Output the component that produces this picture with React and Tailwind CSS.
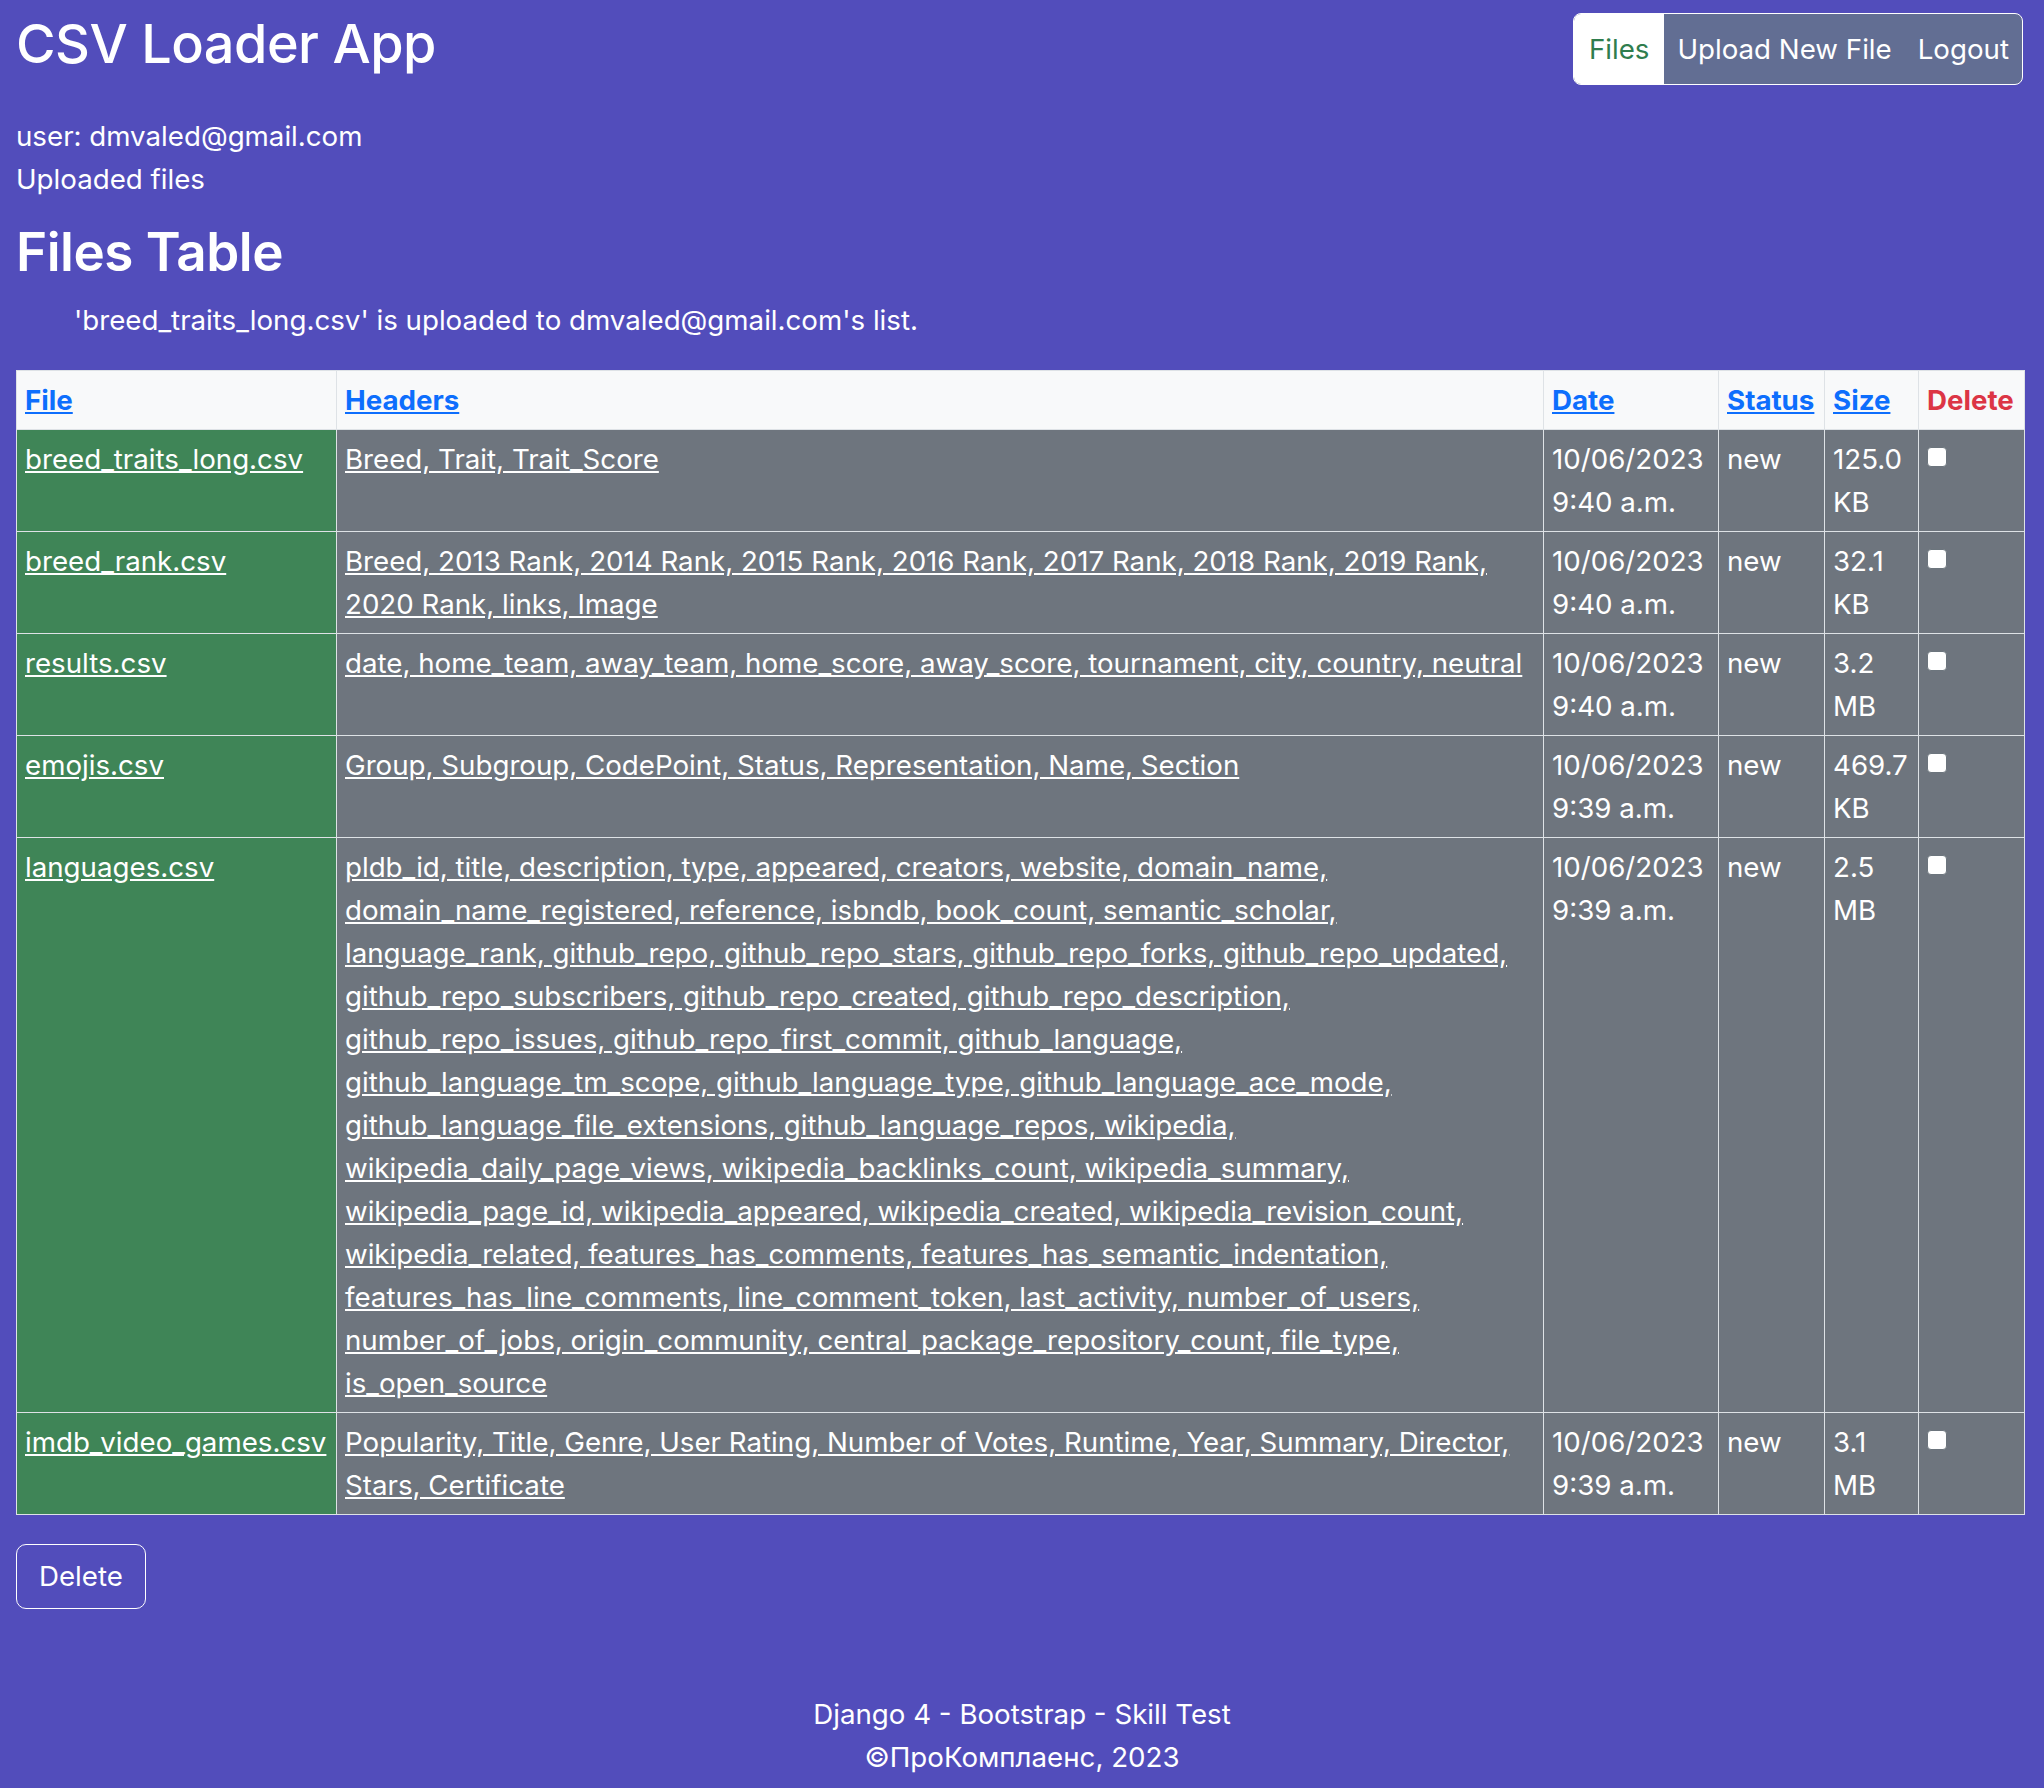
import React from 'react'

const files = [
  {
    name: 'breed_traits_long.csv',
    headers: 'Breed, Trait, Trait_Score',
    date: '10/06/2023',
    time: '9:40 a.m.',
    status: 'new',
    size: ['125.0', 'KB'],
  },
  {
    name: 'breed_rank.csv',
    headers:
      'Breed, 2013 Rank, 2014 Rank, 2015 Rank, 2016 Rank, 2017 Rank, 2018 Rank, 2019 Rank, 2020 Rank, links, Image',
    date: '10/06/2023',
    time: '9:40 a.m.',
    status: 'new',
    size: ['32.1', 'KB'],
  },
  {
    name: 'results.csv',
    headers: 'date, home_team, away_team, home_score, away_score, tournament, city, country, neutral',
    date: '10/06/2023',
    time: '9:40 a.m.',
    status: 'new',
    size: ['3.2', 'MB'],
  },
  {
    name: 'emojis.csv',
    headers: 'Group, Subgroup, CodePoint, Status, Representation, Name, Section',
    date: '10/06/2023',
    time: '9:39 a.m.',
    status: 'new',
    size: ['469.7', 'KB'],
  },
  {
    name: 'languages.csv',
    headers:
      'pldb_id, title, description, type, appeared, creators, website, domain_name, domain_name_registered, reference, isbndb, book_count, semantic_scholar, language_rank, github_repo, github_repo_stars, github_repo_forks, github_repo_updated, github_repo_subscribers, github_repo_created, github_repo_description, github_repo_issues, github_repo_first_commit, github_language, github_language_tm_scope, github_language_type, github_language_ace_mode, github_language_file_extensions, github_language_repos, wikipedia, wikipedia_daily_page_views, wikipedia_backlinks_count, wikipedia_summary, wikipedia_page_id, wikipedia_appeared, wikipedia_created, wikipedia_revision_count, wikipedia_related, features_has_comments, features_has_semantic_indentation, features_has_line_comments, line_comment_token, last_activity, number_of_users, number_of_jobs, origin_community, central_package_repository_count, file_type, is_open_source',
    date: '10/06/2023',
    time: '9:39 a.m.',
    status: 'new',
    size: ['2.5', 'MB'],
  },
  {
    name: 'imdb_video_games.csv',
    headers:
      'Popularity, Title, Genre, User Rating, Number of Votes, Runtime, Year, Summary, Director, Stars, Certificate',
    date: '10/06/2023',
    time: '9:39 a.m.',
    status: 'new',
    size: ['3.1', 'MB'],
  },
]

export default function App() {
  return (
    <div
      className="min-h-screen bg-[#524dbb] text-white text-[27.7px] leading-[43px] flex flex-col"
      style={{ fontFamily: 'Inter, "Noto Sans", sans-serif' }}
    >
      {/* Header */}
      <div className="flex items-start justify-between pl-4 pr-[21px] pt-[10px]">
        <h1 className="text-[54px] leading-[67px] font-medium tracking-[-0.5px]">CSV Loader App</h1>
        <nav className="mt-[3px] flex border border-white rounded-[8px] overflow-hidden bg-[#626e93]">
          <a href="#" className="bg-white text-[#2f7d4e] px-[15px] py-[13px] leading-[44px]">
            Files
          </a>
          <a href="#" className="px-[13px] py-[13px] leading-[44px]">
            Upload New File
          </a>
          <a href="#" className="px-[13px] py-[13px] leading-[44px]">
            Logout
          </a>
        </nav>
      </div>

      <div className="px-4 mt-[30px]">
        <p>user: dmvaled@gmail.com</p>
        <p>Uploaded files</p>
        <h2 className="mt-[20px] text-[53px] leading-[62px] font-semibold tracking-[-0.5px]">Files Table</h2>
        <ul className="mt-[16px] pl-[58px]">
          <li>'breed_traits_long.csv' is uploaded to dmvaled@gmail.com's list.</li>
        </ul>

        {/* Files table */}
        <table className="mt-[28px] w-[2008px] table-fixed border-collapse">
          <colgroup>
            <col className="w-[320px]" />
            <col className="w-[1207px]" />
            <col className="w-[175px]" />
            <col className="w-[106px]" />
            <col className="w-[94px]" />
            <col className="w-[106px]" />
          </colgroup>
          <thead>
            <tr className="bg-[#f8f9fa] font-semibold">
              <th className="border border-[#dee2e6] px-2 py-[7.5px] text-left align-top">
                <a href="#" className="text-[#0d6efd] underline">File</a>
              </th>
              <th className="border border-[#dee2e6] px-2 py-[7.5px] text-left align-top">
                <a href="#" className="text-[#0d6efd] underline">Headers</a>
              </th>
              <th className="border border-[#dee2e6] px-2 py-[7.5px] text-left align-top">
                <a href="#" className="text-[#0d6efd] underline">Date</a>
              </th>
              <th className="border border-[#dee2e6] px-2 py-[7.5px] text-left align-top">
                <a href="#" className="text-[#0d6efd] underline">Status</a>
              </th>
              <th className="border border-[#dee2e6] px-2 py-[7.5px] text-left align-top">
                <a href="#" className="text-[#0d6efd] underline">Size</a>
              </th>
              <th className="border border-[#dee2e6] px-2 py-[7.5px] text-left align-top text-[#dc3545]">
                Delete
              </th>
            </tr>
          </thead>
          <tbody>
            {files.map((f) => (
              <tr key={f.name} className="align-top">
                <td className="border border-[#dee2e6] bg-[#3f8557] px-2 py-[7.5px]">
                  <a href="#" className="underline">{f.name}</a>
                </td>
                <td className="border border-[#dee2e6] bg-[#6e757e] px-2 py-[7.5px]">
                  <a href="#" className="underline">{f.headers}</a>
                </td>
                <td className="border border-[#dee2e6] bg-[#6e757e] px-2 py-[7.5px]">
                  {f.date}
                  <br />
                  {f.time}
                </td>
                <td className="border border-[#dee2e6] bg-[#6e757e] px-2 py-[7.5px]">{f.status}</td>
                <td className="border border-[#dee2e6] bg-[#6e757e] px-2 py-[7.5px]">
                  {f.size[0]}
                  <br />
                  {f.size[1]}
                </td>
                <td className="border border-[#dee2e6] bg-[#6e757e] px-2 py-[7.5px]">
                  <input
                    type="checkbox"
                    className="appearance-none mt-[9px] block w-[20px] h-[20px] bg-white rounded-[4px] border border-[#6c757d]"
                  />
                </td>
              </tr>
            ))}
          </tbody>
        </table>

        <button className="mt-[29px] h-[65px] px-[22px] border border-white rounded-[10px] text-white">
          Delete
        </button>
      </div>

      {/* Footer */}
      <footer className="mt-[84px] text-center">
        <p>Django 4 - Bootstrap - Skill Test</p>
        <p>©ПроКомплаенс, 2023</p>
      </footer>
    </div>
  )
}
